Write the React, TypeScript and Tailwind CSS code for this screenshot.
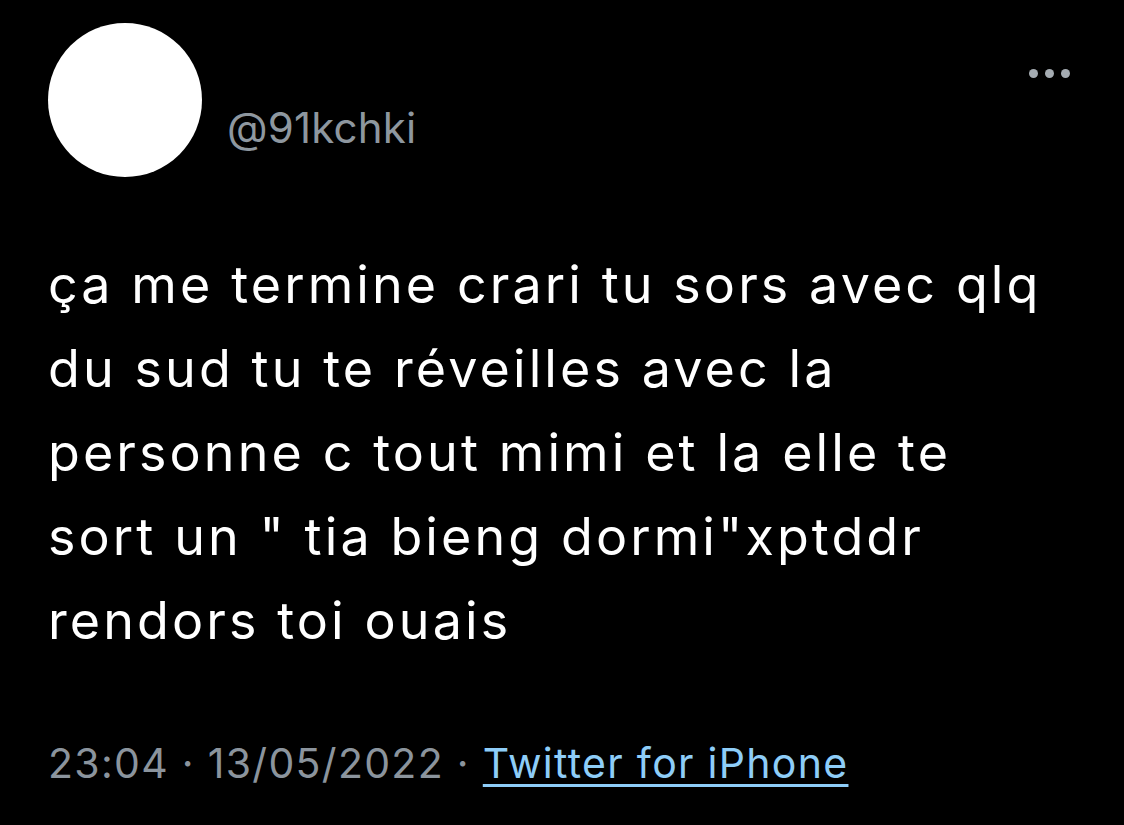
export default function App() {
  const lines = [
    "ça me termine crari tu sors avec qlq",
    "du sud tu te réveilles avec la",
    "personne c tout mimi et la elle te",
    "sort un \" tia bieng dormi\"xptddr",
    "rendors toi ouais",
  ];

  return (
    <div className="h-[825px] w-[1124px] overflow-hidden bg-black font-['Inter',sans-serif]">
      <div className="flex items-start justify-between pl-[48px] pr-[54px] pt-[23px]">
        <div className="flex items-start gap-[25px]">
          <div className="h-[154px] w-[154px] rounded-full bg-white" />
          <span className="mt-[80px] text-[42px] leading-[50px] tracking-[0.2px] text-[#8e979f]">@91kchki</span>
        </div>
        <div className="mt-[46px] flex gap-[7px]">
          <span className="h-[9px] w-[9px] rounded-full bg-[#a5acb2]" />
          <span className="h-[9px] w-[9px] rounded-full bg-[#a5acb2]" />
          <span className="h-[9px] w-[9px] rounded-full bg-[#a5acb2]" />
        </div>
      </div>

      {/* tweet body */}
      <div className="mt-[66px] pl-[48px] text-[52px] leading-[84px] tracking-[3.1px] text-white">
        {lines.map((l) => (
          <p key={l} className="whitespace-pre">{l}</p>
        ))}
      </div>

      <div className="mt-[76px] pl-[48px] text-[41px] leading-[48px] tracking-[1.3px] text-[#8b949d]">
        23:04 · 13/05/2022 ·{" "}
        <span className="text-[#8ecdf8] underline decoration-[3px] underline-offset-[6px]">Twitter for iPhone</span>
      </div>
    </div>
  );
}
